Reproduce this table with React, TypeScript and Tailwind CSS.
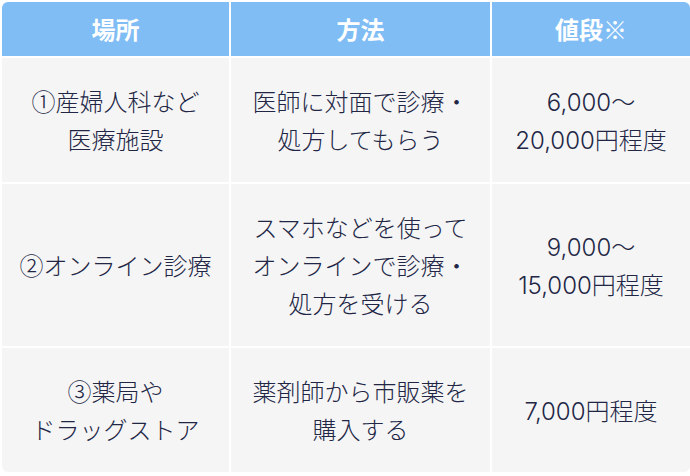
const HEAD = ["場所", "方法", "値段※"];

const ROWS: string[][][] = [
  [["①産婦人科など", "医療施設"], ["医師に対面で診療・", "処方してもらう"], ["6,000〜", "20,000円程度"]],
  [["②オンライン診療"], ["スマホなどを使って", "オンラインで診療・", "処方を受ける"], ["9,000〜", "15,000円程度"]],
  [["③薬局や", "ドラッグストア"], ["薬剤師から市販薬を", "購入する"], ["7,000円程度"]],
];

// digits read wider in the reference, so set them in Inter
function Line({ text }: { text: string }) {
  const parts = text.split(/([0-9,]+)/).filter(Boolean);
  return (
    <span className="block h-[38px] whitespace-nowrap">
      {parts.map((p, i) =>
        /^[0-9,]+$/.test(p) ? (
          <span key={i} className="font-['Inter']">
            {p}
          </span>
        ) : (
          <span key={i}>{p}</span>
        )
      )}
    </span>
  );
}

export default function App() {
  return (
    <div className="w-[690px] h-[476px] bg-white pl-[2px] pt-[2px] pb-[2px] font-['Noto_Sans_CJK_JP','Noto_Sans',sans-serif]">
      <div className="grid grid-cols-[227px_259px_198px] gap-[2px] rounded-md overflow-hidden">
        {HEAD.map((h) => (
          <div
            key={h}
            className="flex items-center justify-center bg-[#80bdf5] py-[8px] text-[24px] leading-[38px] font-bold text-white"
          >
            {h}
          </div>
        ))}
        {ROWS.map((row, ri) =>
          row.map((cell, ci) => (
            <div
              key={`${ri}-${ci}`}
              className="flex flex-col items-center justify-center bg-[#f5f5f5] py-[24px] text-center text-[24px] leading-[38px] font-light text-[#222645]"
            >
              {cell.map((line) => (
                <Line key={line} text={line} />
              ))}
            </div>
          ))
        )}
      </div>
    </div>
  );
}
